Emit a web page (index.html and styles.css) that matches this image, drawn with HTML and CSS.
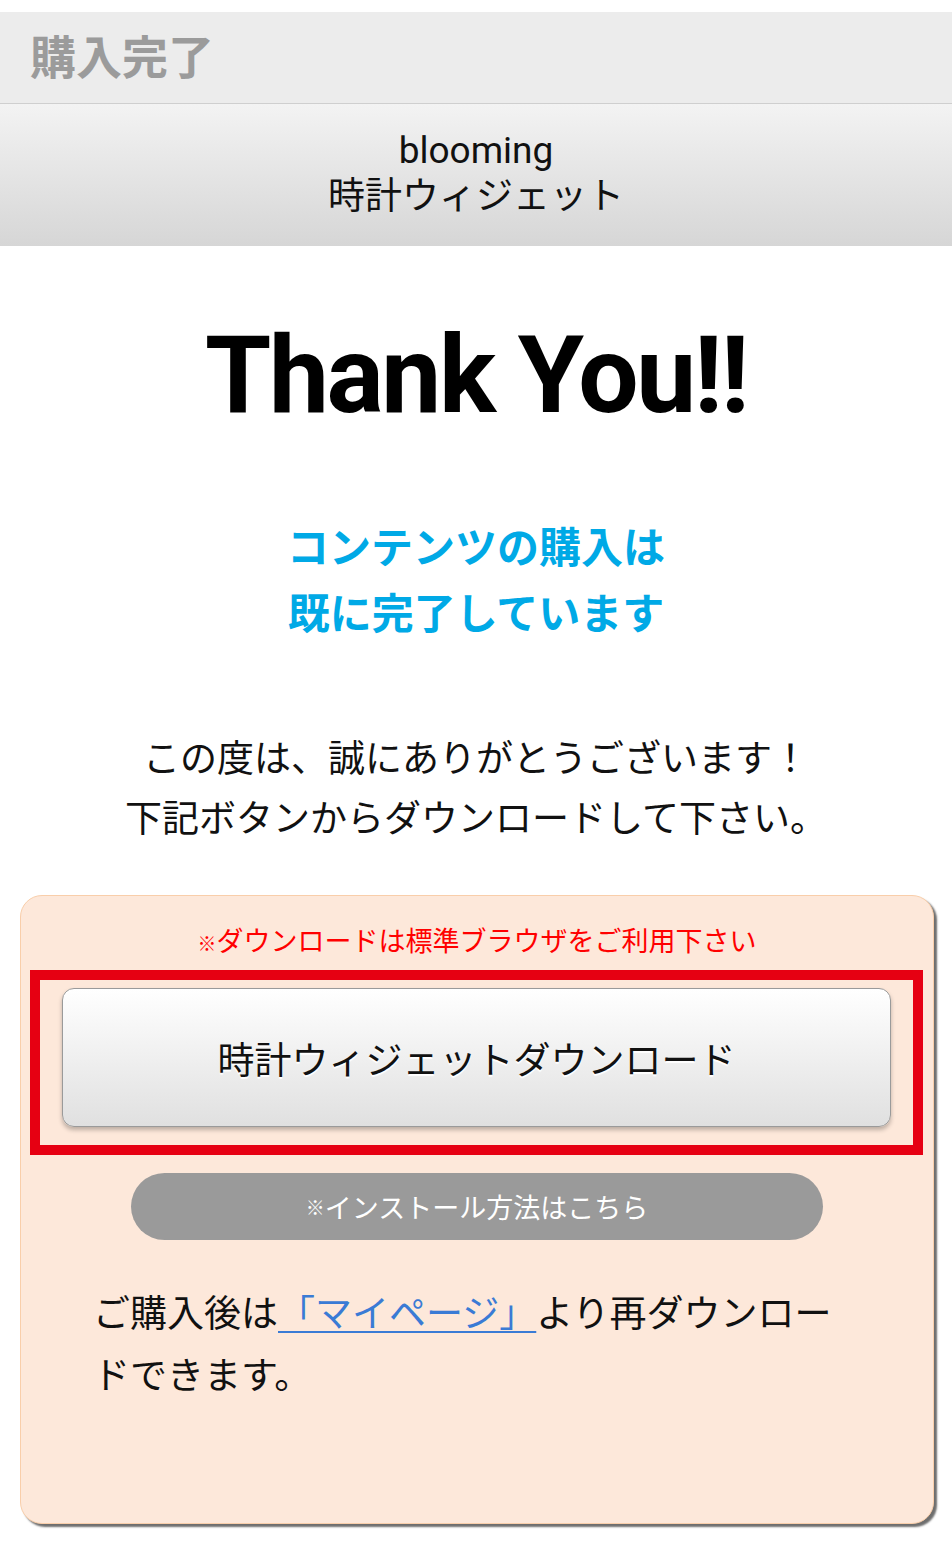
FILE: index.html
```html
<!DOCTYPE html>
<html lang="ja">
<head>
<meta charset="utf-8">
<title>購入完了</title>
<link rel="stylesheet" href="styles.css">
</head>
<body>
<div class="page">
  <header class="topbar"><h1 class="topbar-title">購入完了</h1></header>
  <div class="product">
    <div class="product-line">blooming</div>
    <div class="product-line">時計ウィジェット</div>
  </div>
  <main class="main">
    <div class="thanks">Thank You!!</div>
    <p class="lead">コンテンツの購入は<br>既に完了しています</p>
    <p class="msg">この度は、誠にありがとうございます！<br>下記ボタンからダウンロードして下さい。</p>
    <section class="dlbox">
      <p class="notice"><span class="kome">※</span>ダウンロードは標準ブラウザをご利用下さい</p>
      <div class="highlight">
        <a class="dl-btn" href="#">時計ウィジェットダウンロード</a>
      </div>
      <a class="install-btn" href="#"><span class="kome">※</span>インストール方法はこちら</a>
      <p class="after">ご購入後は<a class="mypage" href="#">「マイページ」</a>より再ダウンロー<br>ドできます。</p>
    </section>
  </main>
</div>
</body>
</html>
```
FILE: styles.css
```css
* { box-sizing: border-box; }
html, body { margin: 0; padding: 0; background: #fff; }
body {
  font-family: Roboto, "Noto Sans CJK JP", sans-serif;
  color: #111;
}
.page { padding-top: 12px; }
.topbar {
  height: 92px;
  background: #ececec;
  border-bottom: 1px solid #cfcfcf;
  display: flex;
  align-items: center;
  padding: 0 0 7px 30px;
}
.topbar-title {
  margin: 0;
  font-family: "Noto Sans CJK JP", sans-serif;
  font-weight: 700;
  font-size: 46px;
  color: #9b9b9b;
  line-height: 1;
}
.product {
  height: 142px;
  background: linear-gradient(#f3f3f3, #d6d6d6);
  display: flex;
  flex-direction: column;
  justify-content: center;
  align-items: center;
  font-size: 37px;
  line-height: 46px;
  color: #111;
  padding-bottom: 3px;
}
.product-line { font-family: Roboto, "Noto Sans CJK JP", sans-serif; }
.main { text-align: center; }
.thanks {
  margin-top: 70px;
  font-family: Roboto, sans-serif;
  font-weight: 700;
  font-size: 107px;
  line-height: 120px;
  color: #000;
  letter-spacing: -2.4px;
}
.lead {
  margin: 76px 0 0;
  font-family: "Noto Sans CJK JP", sans-serif;
  font-weight: 700;
  font-size: 42px;
  line-height: 66px;
  color: #00a9e6;
}
.msg {
  margin: 82px 0 0;
  font-family: "Noto Sans CJK JP", sans-serif;
  font-size: 37px;
  line-height: 60px;
  color: #111;
}
.dlbox {
  margin: 49px 18px 28px 20px;
  background: #fde8da;
  border: 1px solid #f9ceaa;
  border-radius: 22px;
  box-shadow: 3px 3px 2px #6e6e6e;
  padding: 26px 0 119px;
  display: flex;
  flex-direction: column;
  align-items: stretch;
}
.notice {
  margin: 0;
  font-family: "Noto Sans CJK JP", sans-serif;
  font-size: 27px;
  line-height: 36px;
  color: #ff0000;
}
.kome { font-size: 0.7em; }
.highlight {
  margin: 9px 10px 0 9px;
  border: 10px solid #e60012;
  padding: 8px 22px 18px;
}
.dl-btn {
  display: flex;
  align-items: center;
  justify-content: center;
  height: 139px;
  border: 1px solid #9a9a9a;
  border-radius: 12px;
  background: linear-gradient(#ffffff, #e0e0e0);
  box-shadow: 0 3px 4px rgba(0,0,0,0.25);
  font-family: "Noto Sans CJK JP", sans-serif;
  font-size: 37px;
  color: #111;
  text-decoration: none;
  text-shadow: 0 2px 1px #fff;
}
.install-btn {
  align-self: center;
  margin-top: 18px;
  width: 692px;
  height: 67px;
  border-radius: 34px;
  background: #9a9a9a;
  color: #fff;
  font-family: "Noto Sans CJK JP", sans-serif;
  font-size: 27px;
  text-decoration: none;
  display: flex;
  align-items: center;
  justify-content: center;
}
.after {
  margin: 40px 0 0 72px;
  width: 760px;
  text-align: left;
  font-family: "Noto Sans CJK JP", sans-serif;
  font-size: 37px;
  line-height: 62px;
  color: #111;
}
.mypage {
  color: #3a7bd5;
  text-decoration: underline;
  text-decoration-thickness: 2px;
  text-underline-offset: 4px;
}
```
